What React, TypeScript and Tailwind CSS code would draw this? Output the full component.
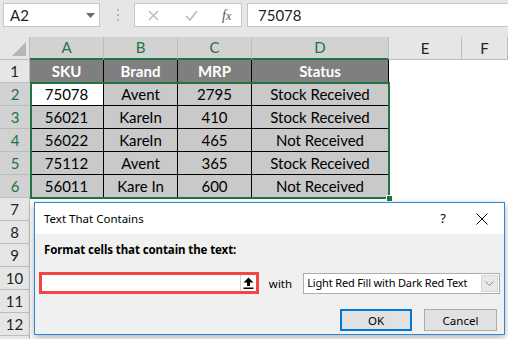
import React from "react";

const cellFont = { fontFamily: "Lato, 'Open Sans', sans-serif" };

const cols = ["A", "B", "C", "D", "E", "F"];
const colW = ["w-[74px]", "w-[74px]", "w-[74px]", "w-[137px]", "w-[73px]", "w-[46px]"];

const data = [
  ["SKU", "Brand", "MRP", "Status"],
  ["75078", "Avent", "2795", "Stock Received"],
  ["56021", "KareIn", "410", "Stock Received"],
  ["56022", "KareIn", "465", "Not Received"],
  ["75112", "Avent", "365", "Stock Received"],
  ["56011", "Kare In", "600", "Not Received"],
];

function Toolbar() {
  return (
    <div className="flex h-[37px] items-start bg-[#e6e6e6] pt-[3px]">
      <div className="ml-[3px] flex h-[24px] w-[97px] items-center justify-between border border-[#c6c6c6] bg-white pl-[6px] pr-[4px] text-[15px] text-[#222]">
        <span>A2</span>
        <svg width="9" height="5" viewBox="0 0 9 5">
          <path d="M0 0 L9 0 L4.5 5 Z" fill="#6b6b6b" />
        </svg>
      </div>
      <div className="ml-[17px] mt-[6px] flex w-[4px] flex-col gap-[3px]">
        <span className="h-[2px] w-[2px] bg-[#b4b4b4]" />
        <span className="h-[2px] w-[2px] bg-[#b4b4b4]" />
        <span className="h-[2px] w-[2px] bg-[#b4b4b4]" />
      </div>
      <div className="ml-[13px] flex h-[24px] w-[108px] items-center border border-[#c6c6c6] bg-white">
        <svg className="ml-[13px]" width="11" height="11" viewBox="0 0 11 11">
          <path d="M1 1 L10 10 M10 1 L1 10" stroke="#b9b9b9" strokeWidth="1.3" />
        </svg>
        <svg className="ml-[26px]" width="13" height="11" viewBox="0 0 13 11">
          <path d="M1 6 L5 10 L12 1" stroke="#b9b9b9" strokeWidth="1.6" fill="none" />
        </svg>
        <span
          className="ml-[24px] text-[14px] italic text-[#555]"
          style={{ fontFamily: "'Liberation Serif', serif" }}
        >
          f<span className="text-[12px]">x</span>
        </span>
      </div>
      <div className="ml-[5px] flex h-[24px] flex-1 items-center border-y border-l border-[#c6c6c6] bg-white pl-[10px] text-[15px] text-[#222]">
        75078
      </div>
    </div>
  );
}

function ColumnHeaders() {
  return (
    <div className="flex h-[23px]">
      <div className="relative w-[30px] border-b border-r border-[#bcbcbc] bg-[#e6e6e6]">
        <svg className="absolute bottom-[3px] right-[3px]" width="14" height="14" viewBox="0 0 14 14">
          <path d="M14 0 L14 14 L0 14 Z" fill="#b6b6b6" />
        </svg>
      </div>
      {cols.map((c, i) => {
        const sel = i < 4;
        return (
          <div
            key={c}
            className={`${colW[i]} flex items-center justify-center border-r text-[15px] ${
              sel
                ? "border-b-2 border-r-[#bcbcbc] border-b-[#217346] bg-[#d2d2d2] text-[#217346]"
                : "border-b border-[#bcbcbc] bg-[#e6e6e6] text-[#222]"
            }`}
          >
            {c}
          </div>
        );
      })}
    </div>
  );
}

function RowHeader({ n }: { n: number }) {
  const sel = n >= 2 && n <= 6;
  return (
    <div
      className={`flex h-[23px] w-[30px] shrink-0 items-center justify-center border-b border-[#bcbcbc] text-[15px] ${
        sel ? "bg-[#d2d2d2] text-[#217346]" : "border-r bg-[#e6e6e6] text-[#222]"
      }`}
    >
      {n < 13 ? n : ""}
    </div>
  );
}

function Grid() {
  const rows = [];
  for (let r = 1; r <= 13; r++) {
    const vals = data[r - 1];
    rows.push(
      <div key={r} className="flex h-[23px]">
        <RowHeader n={r} />
        {cols.map((c, i) => {
          if (vals && i < 4) {
            const head = r === 1;
            const active = r === 2 && i === 0;
            return (
              <div
                key={c}
                className={`${colW[i]} flex h-[23px] items-center justify-center border-b border-r border-black text-[15px] ${
                  head
                    ? "bg-[#7f7f7f] font-bold text-white"
                    : active
                    ? "bg-white text-black"
                    : "bg-[#c9c9c9] text-black"
                }`}
              >
                {vals[i]}
              </div>
            );
          }
          return <div key={c} className={`${colW[i]} h-[23px] bg-white`} />;
        })}
      </div>
    );
  }
  return <div>{rows}</div>;
}

function UploadIcon() {
  return (
    <svg width="11" height="12" viewBox="0 0 11 12">
      <path d="M5.5 0.5 L10.5 5.5 L7 5.5 L7 9 L4 9 L4 5.5 L0.5 5.5 Z" fill="#000" />
      <rect x="0.5" y="10.5" width="10" height="1.5" fill="#000" />
    </svg>
  );
}

function Dialog() {
  return (
    <div
      className="absolute left-[34px] top-[202px] flex h-[133px] w-[471px] flex-col border border-[#2b88d8] bg-[#f0f0f0] shadow-[0_3px_8px_rgba(0,0,0,0.3)]"
      style={{ fontFamily: "'Noto Sans', sans-serif" }}
    >
      <div className="flex h-[31px] items-center bg-white pl-[9px] pr-[16px] text-[11.5px] text-black">
        <span className="flex-1">Text That Contains</span>
        <span className="mr-[30px] text-[13px]">?</span>
        <svg width="12" height="12" viewBox="0 0 12 12">
          <path d="M0.5 0.5 L11.5 11.5 M11.5 0.5 L0.5 11.5" stroke="#000" strokeWidth="1" />
        </svg>
      </div>
      <div className="flex flex-1 flex-col px-[4px]">
        <div className="mt-[7px] pl-[5px] text-[11.5px] font-bold tracking-[-0.1px] text-black">
          Format cells that contain the text:
        </div>
        <div className="mt-[14px] flex items-center">
          <div className="flex h-[22px] w-[220px] items-stretch border-[3px] border-[#f24646] bg-white">
            <div className="flex-1" />
            <div className="flex w-[16px] items-center justify-center border-l border-[#d0d0d0] bg-white">
              <UploadIcon />
            </div>
          </div>
          <span className="ml-[10px] text-[11.5px] text-black">with</span>
          <div className="ml-[11px] flex h-[21px] w-[197px] items-center border border-[#adadad] bg-white pl-[3px] text-[11px] tracking-[-0.15px] text-black">
            <span className="flex-1 overflow-hidden whitespace-nowrap">Light Red Fill with Dark Red Text</span>
            <div className="mr-[1px] flex h-[17px] w-[17px] shrink-0 items-center justify-center border border-[#d6d6d6] bg-[#e8e8e8]">
              <svg width="9" height="5" viewBox="0 0 9 5">
                <path d="M0.5 0.5 L4.5 4.5 L8.5 0.5" stroke="#8a8a8a" fill="none" />
              </svg>
            </div>
          </div>
        </div>
        <div className="mt-[15px] flex justify-end gap-[12px] pr-[3px]">
          <div className="flex h-[22px] w-[72px] items-center justify-center border-2 border-[#0078d7] bg-[#e1e1e1] text-[11.5px] text-black">
            OK
          </div>
          <div className="flex h-[22px] w-[73px] items-center justify-center border border-[#adadad] bg-[#e1e1e1] text-[11.5px] text-black">
            Cancel
          </div>
        </div>
      </div>
    </div>
  );
}

export default function App() {
  return (
    <div className="relative h-[339px] w-[508px] overflow-hidden bg-white" style={cellFont}>
      <Toolbar />
      <ColumnHeaders />
      <Grid />
      <div className="absolute left-[30px] top-[82px] h-[117px] w-[360px] border-2 border-[#217346]" />
      <div className="absolute left-[386px] top-[195px] h-[7px] w-[7px] border border-white bg-[#217346]" />
      <Dialog />
    </div>
  );
}
